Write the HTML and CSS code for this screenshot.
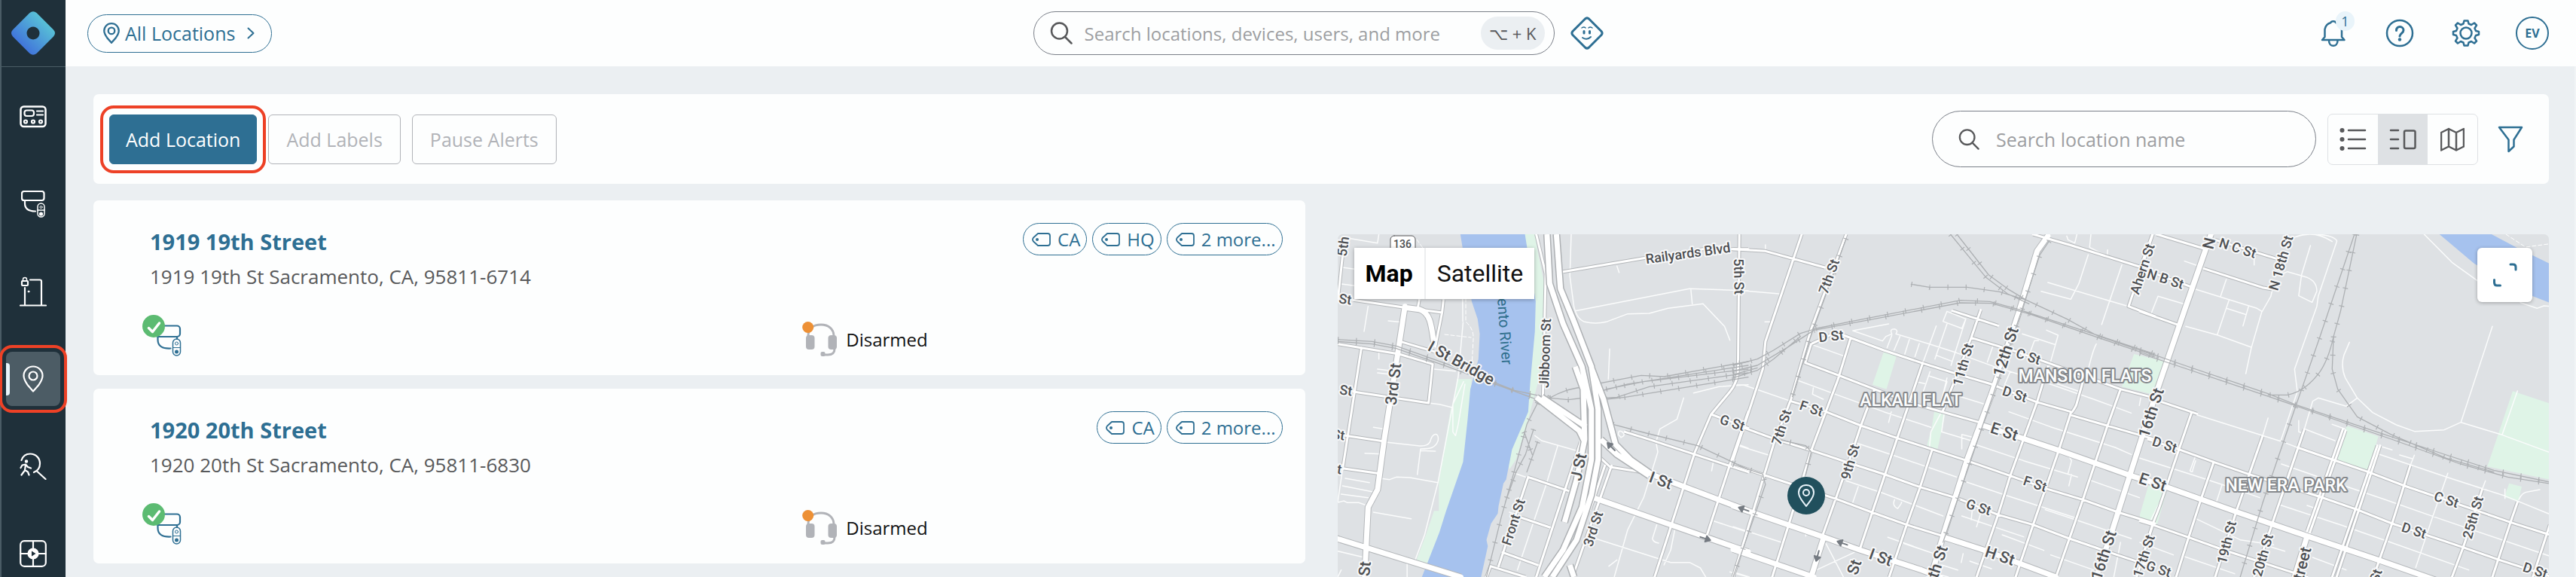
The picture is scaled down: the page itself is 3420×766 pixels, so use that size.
FILE: index.html
```html
<!DOCTYPE html>
<html lang="en">
<head>
<meta charset="utf-8">
<meta name="viewport" content="width=device-width, initial-scale=1">
<title>Locations</title>
<link rel="stylesheet" href="styles.css">
</head>
<body>
<svg class="sprite" aria-hidden="true">
  <symbol id="i-pin" viewBox="0 0 28 36"><path d="M14 1.5C7 1.5 1.5 7 1.5 13.800c0 4.500 2.500 8.500 5.500 12.700L14 34.500l7-8c3-4.200 5.500-8.200 5.500-12.700C26.500 7 21 1.500 14 1.500z"/><circle cx="14" cy="14" r="5.500"/></symbol>
  <symbol id="i-search" viewBox="0 0 30 30"><circle cx="12.500" cy="12" r="10.500"/><path d="M20 20l8.500 8.500"/></symbol>
  <symbol id="i-tag" viewBox="0 0 26 18"><path d="M9 1h13a3 3 0 0 1 3 3v10a3 3 0 0 1-3 3H9L3 11.500Q1 9 3 6.500z"/><circle class="dot" cx="8" cy="9" r="2"/></symbol>
  <symbol id="i-camera" viewBox="0 0 52 55">
    <rect x="17" y="14.500" width="33" height="14.500" rx="4"/><path d="M20.500 30v3c0 8.500 6 12 17 11.500M46 29v3"/>
    <rect class="remote" x="40.500" y="32" width="10" height="22" rx="5"/><path class="thin" d="M40.500 43.500h10"/><circle class="thin" cx="45.500" cy="38" r="2"/><circle class="dot" cx="45.500" cy="49" r="2.500"/>
    <circle class="ok" cx="15" cy="15" r="15"/><path class="tick" d="M8.500 17.500l5 5L22.500 11"/>
  </symbol>
  <symbol id="i-headset" viewBox="0 0 46 46">
    <path class="band" d="M8 19C8 9 15 4 25 4s17 6 17 15M43 36c0 6-3 8-9 8h-6"/>
    <rect class="pad" x="5" y="18" width="11.500" height="19" rx="4"/><rect class="pad" x="34.500" y="18" width="11.500" height="19" rx="4"/><rect class="pad" x="24.500" y="40" width="6" height="6" rx="2"/>
    <circle class="state" cx="7.700" cy="7.500" r="7.500"/>
  </symbol>
</svg>
<div class="app">
  <nav class="sidebar" aria-label="Main">
    <a class="logo" href="#" aria-label="Home">
      <svg width="58" height="58" viewBox="0 0 58 58"><defs><linearGradient id="brand" x1="0.200" y1="0.800" x2="0.800" y2="0.200"><stop offset="0" stop-color="#4072db"/><stop offset="1" stop-color="#59c4d6"/></linearGradient></defs><path fill="url(#brand)" fill-rule="evenodd" d="M24.500 2Q29-1.500 33.500 2L56 24.500Q60 29 56 33.500L33.500 56Q29 59.500 24.500 56L2 33.500Q-2 29 2 24.500zM29 20.500a8.500 8.500 0 1 0 .01 0z"/></svg>
    </a>
    <div class="nav-items">
      <a class="nav-item" href="#" aria-label="Intercoms"><svg class="icon-line" width="36" height="30" viewBox="0 0 36 30"><rect x="1.500" y="1.500" width="33" height="26.500" rx="4" stroke-width="2.500"/><rect x="6.500" y="6.500" width="12.500" height="7.500" rx="3"/><path d="M23 7.500h8M23 12.500h8"/><circle cx="8" cy="21.500" r="2"/><circle cx="18" cy="21.500" r="2"/><circle cx="28" cy="21.500" r="2"/></svg></a>
      <a class="nav-item" href="#" aria-label="Cameras"><svg class="icon-line" width="32" height="36" viewBox="0 0 32 36"><rect x="1" y="1" width="29.500" height="12" rx="3"/><path d="M5 14v3c0 7 5 10.500 14 10.500"/><rect x="22" y="17" width="9" height="18" rx="4.500" stroke-width="1.500"/><path d="M22 26h9" stroke-width="1.500"/><circle cx="26.500" cy="22" r="1.500" stroke-width="1"/><circle cx="26.500" cy="31" r="1.500" fill="#fff"/></svg></a>
      <a class="nav-item" href="#" aria-label="Doors"><svg class="icon-line" width="36" height="40" viewBox="0 0 36 40"><path d="M1 38.500h34M7 38V15M29 38V6.500q0-2-2-2H14"/><rect x="3" y="6" width="8" height="6" rx="1"/><path d="M4.500 6V4a2.500 2.500 0 0 1 5 0v2" stroke-width="1.500"/><circle cx="12" cy="20" r="1" fill="#fff" stroke-width="1"/></svg></a>
      <a class="nav-item is-active" href="#" aria-label="Locations" aria-current="page"><svg class="icon-line" width="28" height="36"><use href="#i-pin"/></svg></a>
      <a class="nav-item" href="#" aria-label="People search"><svg class="icon-line" width="36" height="36" viewBox="0 0 36 36"><path d="M2.500 10C4.500 4 9 1.500 14 1.500c8 0 13 6 13 13 0 5-3 9.500-8 11.500M23.500 25L34.500 35"/><circle cx="9" cy="11.500" r="1.500" fill="#fff" stroke-width="1.500"/><path d="M1.500 20l2-3.500 4.500-1 3 3.500 4 1.500M8 16l-1 7 4 2.500 1.500 4M6.500 24L2.500 29.500"/></svg></a>
      <a class="nav-item" href="#" aria-label="Video walls"><svg class="icon-line" width="36" height="36" viewBox="0 0 36 36"><rect x="1.200" y="1.200" width="33.600" height="33.600" rx="5"/><path d="M18 1v34M1 18h34"/><circle cx="18" cy="18" r="6.500" fill="#fff"/><path d="M16 14.500v7l5.500-3.500z" fill="#1f303a" stroke="none"/></svg></a>
    </div>
  </nav>
  <div class="page">
    <header class="topbar">
      <div class="topbar-start"><button class="scope" type="button"><svg class="scope-pin" width="22" height="28"><use href="#i-pin"/></svg><span>All Locations</span><svg class="chevron" width="10" height="16" viewBox="0 0 10 16"><path d="M1.500 1.500L8.500 8l-7 6.500"/></svg></button></div>
      <div class="topbar-center">
        <label class="global-search"><svg class="search-icon" width="30" height="30"><use href="#i-search"/></svg><input type="search" aria-label="Global search" placeholder="Search locations, devices, users, and more"><kbd>⌥ + K</kbd></label>
        <button class="icon-button" type="button" aria-label="Assistant"><svg width="44" height="44" viewBox="0 0 44 44"><path stroke-width="3" d="M19.500 3Q22 .8 24.500 3L41 19.500Q43.200 22 41 24.500L24.500 41Q22 43.200 19.500 41L3 24.500Q.8 22 3 19.500z"/><path stroke-width="1.500" d="M15 15q3-2 5 0M24 15q2-2 5 0"/><path stroke-width="3" d="M18 19.500v2.500M25.500 19.500v2.500"/><path stroke-width="2" d="M16 28q6 4 11-1"/></svg></button>
      </div>
      <div class="topbar-end">
        <button class="icon-button" type="button" aria-label="Notifications"><svg width="36" height="38" viewBox="0 0 36 38"><path d="M3 28l3.500-4V14C7.500 8 11 6 14.500 5c.5-2.500 6-2.500 6.500 0 4 1 7.500 4 8 9v10l3.500 4zM12 29c0 9 11.500 9 11.500 0"/></svg><span class="badge">1</span></button>
        <button class="icon-button" type="button" aria-label="Help"><svg width="38" height="38" viewBox="0 0 38 38"><circle cx="19" cy="19" r="17"/><path stroke-width="3" d="M14.500 15.500c0-7 9.500-6 9.500-.5 0 4-4.500 4-5 8"/><circle class="dot" cx="19" cy="27.500" r="2.200"/></svg></button>
        <button class="icon-button" type="button" aria-label="Settings"><svg width="38" height="38" viewBox="0 0 38 38"><path d="M16.500 2.500h5l1 4 3.500 1.500 4-2.500 3 3-2.500 4L32 16l4 1v4l-4 1-1.500 3.500 2.500 4-3 3-4-2.500L22.500 31.500l-1 4h-5l-1-4L12 30l-4 2.500-3-3 2.500-4L6 22l-4-1v-4l4-1 1.500-3.500L5 8.500l3-3L12 8l3.500-1.500z"/><circle cx="19" cy="19" r="7.500"/></svg></button>
        <button class="avatar" type="button" aria-label="Account">EV</button>
      </div>
    </header>
    <main class="content">
      <section class="toolbar" aria-label="Location actions">
        <button class="btn btn-primary" type="button">Add Location</button>
        <button class="btn" type="button" disabled>Add Labels</button>
        <button class="btn" type="button" disabled>Pause Alerts</button>
        <label class="location-search"><svg class="search-icon" width="28" height="28"><use href="#i-search"/></svg><input type="search" aria-label="Search location name" placeholder="Search location name"></label>
        <div class="view-switch" role="group" aria-label="View">
          <button type="button" aria-label="List"><svg width="36" height="32" viewBox="0 0 36 32"><path d="M12 4h22M12 16h22M12 28h22"/><g class="dot"><circle cx="3.500" cy="4" r="3"/><circle cx="3.500" cy="16" r="3"/><circle cx="3.500" cy="28" r="3"/></g></svg></button>
          <button type="button" aria-label="Split" aria-pressed="true"><svg width="36" height="32" viewBox="0 0 36 32"><path d="M2 4h10M2 16h10M2 28h10"/><rect x="20" y="4.500" width="14.500" height="23.500" rx="2"/></svg></button>
          <button type="button" aria-label="Map"><svg width="32" height="32" viewBox="0 0 32 32"><path d="M1 7l10-5 10 5 10-5v23.500L21 30.500l-10-5-10 5zM11 2v23.500M21 7v23.500"/></svg></button>
        </div>
        <button class="filter" type="button" aria-label="Filter"><svg width="34" height="36" viewBox="0 0 34 36"><path d="M2 2h30L21.500 18.500v9L14.500 34V18.500z"/></svg></button>
      </section>
      <div class="columns">
        <div class="list">
          <article class="card">
            <div class="card-head"><div><h2><a href="#">1919 19th Street</a></h2><p>1919 19th St Sacramento, CA, 95811-6714</p></div>
              <div class="tags"><a class="tag" href="#"><svg width="26" height="18"><use href="#i-tag"/></svg>CA</a><a class="tag" href="#"><svg width="26" height="18"><use href="#i-tag"/></svg>HQ</a><a class="tag" href="#"><svg width="26" height="18"><use href="#i-tag"/></svg>2 more...</a></div></div>
            <div class="card-status"><svg class="camera" width="52" height="55" role="img" aria-label="Cameras online"><use href="#i-camera"/></svg><div class="arming"><svg width="46" height="46"><use href="#i-headset"/></svg><span>Disarmed</span></div></div>
          </article>
          <article class="card">
            <div class="card-head"><div><h2><a href="#">1920 20th Street</a></h2><p>1920 20th St Sacramento, CA, 95811-6830</p></div>
              <div class="tags"><a class="tag" href="#"><svg width="26" height="18"><use href="#i-tag"/></svg>CA</a><a class="tag" href="#"><svg width="26" height="18"><use href="#i-tag"/></svg>2 more...</a></div></div>
            <div class="card-status"><svg class="camera" width="52" height="55" role="img" aria-label="Cameras online"><use href="#i-camera"/></svg><div class="arming"><svg width="46" height="46"><use href="#i-headset"/></svg><span>Disarmed</span></div></div>
          </article>
        </div>
        <section class="map" aria-label="Map of locations">
          <svg class="map-canvas" viewBox="1775 311 1609 455" preserveAspectRatio="xMinYMin slice">
            <defs>
              <g id="minor">
                <g transform="translate(1760 290) scale(.35714 .33333)"><path d="M90 80L190 98L195 63M60 195L105 202M50 260L105 268M155 350L140 450M230 408L270 412M195 535V560M190 600L230 605M190 615L245 622M175 832L210 838M143 935L205 938M215 890L340 905Q375 910 385 890C395 850 420 850 415 885C405 915 385 918 350 918L338 1020M350 925L405 927M200 1035L235 1040L260 1030L310 1032L415 1052M380 735L420 740L465 752M400 600L480 608M505 200L507 410M508 415L490 630L415 1050L365 1260L330 1360M510 650L470 740V850L480 865L490 820L515 660M70 1035L160 1052M60 1065L170 1088M55 1098L155 1112M45 1130L65 1125L78 1132H120L155 1145M175 1170L315 1196M60 1000L42 1130M42 1325L140 1350M300 1370V1428M910 63L905 230L920 350Q930 400 960 412Q1000 422 1040 412L1120 380L1200 378L1270 358L1400 340L1480 430L1500 485M925 368L1350 280L1568 288M1355 285L1360 340M1053 520L1048 640M1365 695L1460 670L1568 662M1328 715L1303 800L1240 838L1225 890L1232 930L1180 1110L1120 1240L1070 1428M1085 860Q1085 840 1100 850Q1115 865 1095 872zM1440 960L1432 1005M775 865L800 885L930 925M860 905L820 1050L710 1400M700 1015L740 1030M680 1170L720 1185M1228 1220L1212 1275Q1215 1290 1235 1293M1000 1275L1280 1370L1350 1370L1390 1392L1410 1428M1295 1240L1280 1320L1255 1380M1440 1205L1568 1250M1050 1385L1080 1360M1500 1408L1568 1428M1530 900L1568 915M1080 190L1088 215M42 1428L55 1400"/></g>
                <g transform="translate(2300 290) scale(.35714 .33333)"><path d="M40 288L170 300M120 105V125M118 412H140M0 662L40 664L90 682L215 728M300 505L412 548M240 645L380 700L560 770L735 832M298 675L295 700L335 720M445 447L578 420M445 447L555 488L568 470L590 460Q580 440 600 440Q615 445 605 460L730 500L830 535M590 465L572 515M620 470L598 525M655 482L638 540M692 498L676 550M755 428L705 575M795 370L780 410L850 438L865 400zM795 420L750 560M865 400L810 585M755 545L812 568M732 610L705 695M730 628L795 650L770 735M795 635L778 710M687 652L712 658M588 770L578 812M785 690L930 738M775 770L735 850L730 910M785 772L775 850L885 885M850 860V918M850 860L885 870M460 895L600 945L830 1030M420 1045L560 1095L780 1185M465 1068L445 1130M600 1120Q590 1145 612 1155Q630 1130 625 1130M868 1050L1020 1105L1280 1195M850 1185L1080 1268M885 895L1080 965L1280 1030M1025 770L1180 830L1420 912L1480 940M1100 620L1290 690M1165 655L1340 720L1480 775M1075 460L1195 502M1165 445L1208 465L1175 590M1135 487L1120 487L1105 530M1350 500Q1340 520 1330 560L1310 640M965 510L945 572M830 535L970 590L1165 655M1030 610L1010 660M1250 950L1258 965L1245 1015M1258 1020L1248 1065M1320 1040L1510 1112M1170 255L1405 330L1470 350M1145 290L1255 322L1285 260L1320 145M1445 185L1370 422M1240 70L1245 85L1270 98L1278 63M1330 63L1325 115L1390 150L1392 125M1180 1340L1340 1400M1160 1160L1300 1210L1480 1275M0 1228L180 1290M20 905L140 945M345 1295L410 1428M310 1400L450 1330M270 1250V1265M635 1295L760 1340M775 1380L770 1420L800 1428M775 1380L835 1400M855 1335L848 1370M890 1150L885 1200M920 1175L905 1228M880 1365L960 1395M1000 1260L1155 1322M0 1408L60 1428M1515 715L1510 745M1440 1290L1415 1428M575 1270L760 1340"/></g>
                <g transform="translate(2840 290) scale(.36997 .33333)"><path d="M200 282L420 358L438 370L400 515L380 618M165 430L280 465L400 513M310 243L290 308M320 325L278 462M310 358L378 382M390 350L370 428M40 380L65 310L165 343M160 170L225 195M410 150V185M475 285L470 310L438 372M612 108L580 225L570 308L618 334L635 290Q635 250 600 235L530 212L500 225M545 80Q620 40 690 92M640 63Q700 70 707 90L640 310L635 350L555 600L565 690L505 887L205 782M460 795L440 868M1020 63L1120 175L1214 250M1365 335L1425 358L1450 348L1471 350M1265 430L1152 812L1092 842L985 848L920 822L835 773L780 715L737 635Q720 590 732 545L752 493M780 715L740 748L640 715L620 728L590 840M1152 812L1300 862L1471 932M1355 687L1300 862M690 820L735 838M525 895L565 912M508 978L720 1060L880 1120L1060 1190L1471 1345M860 940L1100 1030L1310 1105L1471 1178M870 910L905 922M932 942L980 958M985 943L970 985M1105 1015L1050 1190L990 1390M1310 1115V1078M1360 1120Q1370 1090 1395 1088L1435 1080M1240 1045L1228 1080M0 955L200 1025L295 1060L430 1112M295 1060L275 1128M200 945L180 1005Q190 1015 190 1000L200 965M500 1140L720 1220L900 1290L1180 1400M200 1195L360 1280L480 1300M620 1350L740 1400M600 1143L640 1158M95 1080L35 1210M0 1290L120 1340M155 1345L340 1415M445 1300L520 1325M570 805V850L580 853M595 840L700 885M0 1385L40 1400"/></g>
              </g>
              <g id="streets">
                <g transform="translate(1760 290) scale(.35714 .33333)"><path d="M780 63L815 220L805 705M880 212L1195 155L1400 122L1568 122M1535 63L1530 600Q1530 650 1500 690L1430 780L1370 930L1220 1428M1568 770L1500 980L1415 1260M1110 850L1200 880L1568 1010M1430 780L1568 835M60 150L42 330M100 325L290 355L430 375L405 510M275 490L400 530M42 500L270 540L395 580L380 735L100 690M130 515L60 1000M70 865L215 888M60 995L190 1015M435 325L430 375M345 325L340 355M750 1030L900 1085M720 1190L830 1230M750 1030L640 1385M655 1330L785 1380M595 1428L610 1385L740 1428M945 890L780 1428M1060 985L915 1428M1035 985L980 1160M1020 955L1055 990L1200 1015"/></g>
                <g transform="translate(2300 290) scale(.35714 .33333)"><path d="M255 63L120 490L110 600L0 960M420 63L290 440L215 720L150 900L0 1428M360 465L290 500L268 575L400 628L525 680L660 735L915 812M437 475L390 640L290 925L205 1225L145 1428M525 680L475 825L430 970L330 1270M705 575L610 875L470 1320M920 365L885 475L780 765M740 920L695 1070L645 1220L580 1428M1170 590L1130 730L1030 1025L985 1180L905 1428M1300 650L1275 745Q1260 775 1255 775L1210 925L1115 1220L1050 1428M1440 680L1390 830L1300 1120L1250 1275L1200 1428M1560 1220L1500 1428M410 465L560 525L700 575L840 622L960 660L1125 730L1255 770M1260 785L1568 880M215 728L345 770L475 825L610 875L740 920L870 965L1030 1025L1170 1078L1300 1120L1430 1170L1568 1215M0 818L145 875L295 925L435 975L565 1020L695 1070L835 1115L985 1180L1115 1220L1250 1275L1400 1330L1568 1390M0 980L110 1020L385 1118L515 1170L645 1220L780 1265M885 475L1050 530L1170 575L1440 680L1568 715M815 368L985 427M1115 63L1250 105L1520 195M0 122L120 130L340 195M1560 63L1470 350L1568 390"/></g>
                <g transform="translate(2840 290) scale(.36997 .33333)"><path d="M185 775L140 920L70 1150L45 1220L0 1380M265 970L220 1115L175 1270L130 1428M440 868L345 1170L270 1428M590 840L475 1215L410 1428M728 840L600 1245M738 845L610 1250M852 905L690 1428M862 905L706 1428M970 985L905 1215L850 1390M1228 1080L1160 1310L1120 1428M1355 1130L1330 1210L1265 1428M1471 1220L1410 1428M62 725L205 778M60 63L230 120M230 200L440 275L475 282M30 210L190 275M0 370L140 425M270 85L490 160M30 880L140 920L265 970L390 1018L650 1110L780 1160L905 1215L1160 1310L1290 1360L1471 1425M565 912L690 960L820 1010L950 1065L1200 1160L1330 1210L1471 1260M0 1205L45 1220L175 1270L300 1320L520 1400L600 1428M45 63L0 200"/></g>
              </g>
              <g id="avenues">
                <g transform="translate(1760 290) scale(.35714 .33333)"><path d="M0 1262L500 1428M292 350L265 540L215 880L190 1080L155 1150L142 1428M292 355L345 362C385 375 390 420 400 500M1210 1020L1568 1165M1000 1115L1568 1328"/></g>
                <g transform="translate(2300 290) scale(.35714 .33333)"><path d="M0 1145L340 1270L470 1320L700 1400L770 1428M0 1318L300 1428M930 825L1060 870L1215 925L1480 1025L1568 1055M1170 70L1130 130L1060 380L960 700L870 960L780 1265L735 1428M785 1270L930 1320L1200 1428M1520 870L1410 1240L1350 1428M335 1275L290 1428"/></g>
                <g transform="translate(2840 290) scale(.36997 .33333)"><path d="M255 63L165 350L60 690L10 860M20 1040L350 1170L600 1265L855 1360L1060 1440M600 1265L555 1428"/></g>
              </g>
              <g id="freeways" transform="translate(1760 290) scale(.35714 .33333)"><path d="M925 590L955 680L960 880L930 1040L885 1210M985 595L1030 720L1075 900L1130 960L1210 1020M780 712L940 845L960 890M800 712L965 830M1020 880L1080 940L1200 1025M820 63L830 260L880 420L950 590L985 760V960L950 1150L880 1320L810 1428M855 63L870 280L920 410L985 590L1010 760V960L985 1100L930 1280L840 1428M905 1380L920 1428"/></g>
              <g id="rails">
                <g transform="translate(1760 290) scale(.35714 .33333)"><path d="M42 482L170 490L260 508L450 580L700 685L830 715M42 490L170 500L260 518L450 590L780 720M785 735L745 820L700 1000L650 1190L595 1428M830 715C870 690 900 680 950 672M830 715L900 722L960 714M1000 660L1170 625L1255 630L1568 570M1010 690L1120 660L1568 585M1040 680L1180 650L1568 600M1020 716L1080 712L1200 670L1568 615M1040 720L1110 712L1568 632M1065 820L1200 858L1380 905L1568 1000M770 840L740 940L705 1010L665 1130M785 890L745 1010M735 850L765 940"/></g>
                <g transform="translate(2300 290) scale(.35714 .33333)"><path d="M0 585L90 560L150 525L250 458L310 438L440 410L845 326L955 331L1060 362L1568 540M0 608L90 585L200 515L300 445L845 336L960 338L1100 380L1568 552M0 635L90 605L150 560L250 470M0 622L90 595M662 262L730 274L870 274L990 292L1090 325L1240 400L1350 465L1568 546M808 63L940 235L1020 300L1100 340M832 63L950 225L1020 280L1090 325M0 980L110 1018L120 1060L0 1428M1175 90L1140 145L1070 375L780 1290M420 80L285 480L220 710M145 875L270 905L290 930L270 1020"/></g>
                <g transform="translate(2840 290) scale(.36997 .33333)"><path d="M0 523L160 585L460 698L560 742L850 850L1100 942L1270 1003L1471 1050M0 537L170 600L470 712L910 882L1150 978L1320 1030L1471 1056M770 63L645 475L560 745L440 1135L360 1428M778 63L720 370L695 470Q675 570 640 620Q590 690 530 703H460M695 470L690 600L710 680L780 790L900 860L1100 955L1270 1010"/></g>
              </g>
              <path id="arrow" d="M-7 0H2M1-4L7 0L1 4z"/>
            </defs>
            <rect class="land" x="1775" y="311" width="1609" height="455"/>
            <g class="park">
              <path transform="translate(1760 290) scale(.35714 .33333)" d="M485 640L480 690L460 770L440 900L418 1050V1165H400L370 1260L335 1360L375 1375L450 1250L520 970L540 640zM730 63H776L785 130L810 260L808 420L790 640L770 720L745 820L705 960L680 1000L670 940L740 700L760 330z"/>
              <path transform="translate(2300 290) scale(.35714 .33333)" d="M560 530L608 545L570 680L518 662zM748 765L790 772L760 918L720 905L738 835z"/>
              <path transform="translate(2840 290) scale(.36997 .33333)" d="M-21 540L92 570L60 705L-65 670zM742 826L856 868L820 1002L707 965zM1338 688L1471 737V1040L1247 988zM1325 1055L1370 1068L1358 1128L1308 1110zM30 1065L98 1080L62 1218L0 1195V1180z"/>
            </g>
            <g class="water">
              <path transform="translate(1760 290) scale(.35714 .33333)" d="M498 63L508 130L540 330L562 400L570 460L565 560L535 680L525 800L508 970L445 1165L420 1250L355 1428H575L600 1305L595 1280L612 1215L637 1175L640 1145L658 1055L668 1040L690 920L750 770L758 650L775 450L778 330L738 63z"/>
              <path transform="translate(2840 290) scale(.36997 .33333)" d="M1075 63L1200 180L1410 310L1471 336V180L1350 115L1262 63z"/>
            </g>
            <path class="trail" d="M1945 340V427Q1956 437 1955 450L1953 488M1917 444L1952 448M1880 318L1890 332M3326 311L3352 328L3382 324"/>
            <use href="#minor" class="minor"/>
            <use href="#streets" class="street-edge"/><use href="#avenues" class="avenue-edge"/>
            <use href="#streets" class="street"/><use href="#avenues" class="avenue"/>
            <use href="#rails" class="rail"/><use href="#rails" class="rail-ties"/>
            <use href="#freeways" class="freeway-edge"/><use href="#freeways" class="freeway"/>
            <g class="arrows"><use href="#arrow" transform="translate(2138 593) rotate(225)"/><use href="#arrow" transform="translate(2314 676) rotate(200)"/><use href="#arrow" transform="translate(2263 715) rotate(18)"/><use href="#arrow" transform="translate(2445 721) rotate(200)"/><use href="#arrow" transform="translate(2412 738) rotate(105)"/></g>
            <g class="shield"><rect x="1845" y="313" width="33" height="26" rx="5"/><text x="1861" y="324">136</text></g>
            <g class="label">
              <text transform="translate(1782 327) rotate(-82)">5th</text><text transform="translate(1785 397) rotate(8)">St</text><text transform="translate(1786 518) rotate(8)">St</text><text transform="translate(1776 577) rotate(8)">St</text><text transform="translate(1772 622) rotate(8)">St</text>
              <text transform="translate(2050 469) rotate(-88)">Jibboom St</text><text transform="translate(2240 336) rotate(-8)">Railyards Blvd</text><text transform="translate(2308 367) rotate(89)">5th St</text><text transform="translate(2299 561) rotate(18)">G St</text><text transform="translate(2008 693) rotate(-72)">Front St</text><text transform="translate(2114 702) rotate(-72)">3rd St</text>
              <text transform="translate(2427 367) rotate(-70)">7th St</text><text transform="translate(2364 567) rotate(-72)">7th St</text><text transform="translate(2430 446) rotate(-6)">D St</text><text transform="translate(2605 484) rotate(-74)">11th St</text><text transform="translate(2692 473) rotate(18)">C St</text><text transform="translate(2674 523) rotate(18)">D St</text><text transform="translate(2404 542) rotate(18)">F St</text><text transform="translate(2455 613) rotate(-74)">9th St</text><text transform="translate(2701 642) rotate(18)">F St</text><text transform="translate(2626 673) rotate(18)">G St</text>
              <text transform="translate(2843 357) rotate(-72)">Ahern St</text><text transform="translate(2845 738) rotate(-72)">17th St</text><text transform="translate(2865 755) rotate(18)">G St</text><text transform="translate(2970 329) rotate(18)">N C St</text><text transform="translate(3027 349) rotate(-74)">N 18th St</text><text transform="translate(2874 370) rotate(18)">N B St</text><text transform="translate(2873 590) rotate(18)">D St</text><text transform="translate(3247 663) rotate(18)">C St</text><text transform="translate(3204 704) rotate(18)">D St</text><text transform="translate(3282 687) rotate(-74)">25th St</text><text transform="translate(3365 757) rotate(18)">D St</text><text transform="translate(2955 720) rotate(-76)">19th St</text><text transform="translate(3003 737) rotate(-74)">20th St</text><text transform="translate(3153 764) rotate(-72)">St</text>
            </g>
            <g class="label label-major">
              <text transform="translate(1849 510) rotate(-83)">3rd St</text><text transform="translate(1939 482) rotate(29)">I St Bridge</text><text transform="translate(2095 620) rotate(-78)">J St</text><text transform="translate(2204 638) rotate(20)">I St</text><text transform="translate(1811 755) rotate(-84)">St</text>
              <text transform="translate(2662 467) rotate(-72)">12th St</text><text transform="translate(2660 573) rotate(18)">E St</text><text transform="translate(2496 740) rotate(20)">I St</text><text transform="translate(2654 738) rotate(18)">H St</text><text transform="translate(2461 753) rotate(-72)">St</text><text transform="translate(2568 757) rotate(-72)">10th St</text><text transform="translate(2855 548) rotate(-72)">16th St</text><text transform="translate(2792 737) rotate(-72)">16th St</text><text transform="translate(2932 323) rotate(-76)">N</text><text transform="translate(2857 640) rotate(18)">E St</text><text transform="translate(3054 754) rotate(-76)">Street</text>
            </g>
            <g class="river"><text transform="translate(1997 440) rotate(86)">ento River</text></g>
            <g class="district"><text x="2767" y="499">MANSION FLATS</text><text x="2536" y="531">ALKALI FLAT</text><text x="3034" y="644">NEW ERA PARK</text></g>
            <g class="marker" transform="translate(2397 658)"><circle class="marker-bg" r="25"/><path d="M0 14C-4 8-10 3-10-4C-10-10-6-14 0-14S10-10 10-4C10 3 4 8 0 14z"/><circle cy="-4" r="4"/></g>
          </svg>
          <div class="map-type"><button class="is-current" type="button">Map</button><button type="button">Satellite</button></div>
          <button class="fullscreen" type="button" aria-label="Toggle fullscreen"><svg width="34" height="32" viewBox="0 0 34 32"><path d="M24 2h3.500q3.500 0 3.500 3.500V9M2.500 22.500V26Q2.500 30 6 30h4.500"/></svg></button>
        </section>
      </div>
    </main>
  </div>
</div>
</body>
</html>
```
FILE: styles.css
```css
:root {
  --blue: #2e6f93;
  --ink: #58595b;
  --muted: #9d9fa2;
  --disabled: #b1b3b8;
  --surface: #fdfefe;
  --canvas: #ebeff2;
  --navy: #1f303a;
  --alert: #ed4126;
}

* { box-sizing: border-box; }
body { margin: 0; font-family: "Open Sans", "Noto Sans", sans-serif; font-size: 25px; color: var(--ink); background: var(--canvas); }
button, input, kbd { font: inherit; color: inherit; }
button { padding: 0; border: 0; background: none; }
a { color: inherit; text-decoration: none; }
svg { display: block; flex: none; fill: none; stroke: currentColor; stroke-width: 2.5; stroke-linecap: round; stroke-linejoin: round; }
.sprite { position: absolute; width: 0; height: 0; }
.dot { fill: currentColor; stroke: none; }

.app { display: flex; height: 100vh; overflow: hidden; }

/* Sidebar */
.sidebar { flex: none; position: relative; z-index: 1; width: 87px; box-shadow: inset 2px 0 #4a5c65; background: var(--navy); color: #fff; }
.logo { display: flex; align-items: center; justify-content: center; height: 89px; border-bottom: 1px solid #4a5c65; }
.logo svg { stroke: none; }
.nav-items { display: flex; flex-direction: column; align-items: center; gap: 44px; padding-top: 30px; }
.nav-item { display: flex; align-items: center; justify-content: center; width: 72px; height: 72px; border-radius: 8px; }
.nav-item .icon-line { stroke-width: 2.2; }
.nav-item.is-active { position: relative; background: #4c5c65; outline: 4px solid var(--alert); outline-offset: 5px; border-radius: 8px; }
.nav-item.is-active::before { content: ""; position: absolute; left: 0; top: 15px; width: 5px; height: 43px; border-radius: 0 4px 4px 0; background: #e9f4fa; }

/* Top bar */
.page { flex: 1; min-width: 0; display: flex; flex-direction: column; }
.topbar { flex: none; display: grid; grid-template-columns: 1fr auto 1fr; align-items: center; height: 88px; padding: 0 36px 0 29px; background: var(--surface); color: var(--blue); }
.scope { display: flex; align-items: center; gap: 7px; height: 51px; padding: 0 22px 0 20px; border: 1px solid var(--blue); border-radius: 26px; }
.scope-pin { stroke-width: 3; }
.chevron { margin-left: 9px; stroke-width: 2; }
.topbar-center { display: flex; align-items: center; gap: 21px; }
.global-search { display: flex; align-items: center; gap: 16px; width: 692px; height: 58px; padding: 0 12px 0 21px; border: 1px solid #7a7f88; border-radius: 29px; color: var(--ink); font-size: 24px; }
input { flex: 1; min-width: 0; padding: 0; border: 0; outline: 0; background: none; }
input::placeholder { color: var(--muted); opacity: 1; }
kbd { flex: none; padding: 0 11px; border-radius: 22px; background: var(--canvas); font-size: 22px; line-height: 44px; }
.topbar-end { display: flex; justify-content: flex-end; align-items: center; gap: 44px; }
.icon-button { position: relative; display: flex; align-items: center; justify-content: center; width: 44px; height: 44px; color: var(--blue); }
.badge { position: absolute; top: -7px; right: -6px; width: 25px; height: 26px; border-radius: 13px; background: #e9f4fa; font-size: 18px; line-height: 26px; text-align: center; }
.avatar { width: 44px; height: 44px; border: 2px solid var(--blue); border-radius: 22px; font-size: 16px; font-weight: 700; }

/* Toolbar */
.content { flex: 1; min-height: 0; display: flex; flex-direction: column; gap: 22px; padding: 37px 34px 0 37px; border-right: 2px solid #f1f4f6; }
.toolbar { flex: none; display: flex; align-items: center; gap: 15px; padding: 22px 34px 22px 21px; border-radius: 7px; background: var(--surface); }
.btn { height: 66px; padding: 0 23px; border: 1px solid var(--disabled); border-radius: 6px; color: var(--disabled); }
.btn-primary { padding: 0 21px; border-color: var(--blue); background: var(--blue); color: #fff; outline: 4px solid var(--alert); outline-offset: 8px; }
.location-search { display: flex; align-items: center; gap: 22px; width: 510px; height: 75px; margin-left: auto; padding: 0 34px; border: 1px solid #7a7f88; border-radius: 38px; }
.view-switch { display: flex; height: 68px; border: 1px solid #dee1e4; border-radius: 7px; overflow: hidden; }
.view-switch button { display: flex; align-items: center; justify-content: center; width: 66px; }
.view-switch button[aria-pressed="true"] { background: #dee1e4; }
.filter { margin-left: 11px; color: var(--blue); }

/* Location list */
.columns { flex: 1; min-height: 0; display: grid; grid-template-columns: 1fr 1fr; grid-template-rows: 100%; gap: 43px; }
.list { display: flex; flex-direction: column; gap: 18px; }
.card { flex: none; padding: 30px 30px 25px 65px; border-radius: 7px; background: var(--surface); }
.card-head { display: flex; justify-content: space-between; align-items: flex-start; padding-left: 10px; }
h2 { margin: 7px 0 10px; color: var(--blue); font-size: 29px; line-height: 36px; font-weight: 700; }
p { margin: 0; font-size: 26px; line-height: 36px; }
.tags { display: flex; gap: 7px; color: var(--blue); font-size: 24px; }
.tag { display: flex; align-items: center; gap: 9px; height: 43px; padding: 0 8px 0 10px; border: 1px solid var(--blue); border-radius: 22px; }
.tag svg { stroke-width: 1.8; }
.card-status { display: grid; grid-template-columns: 11fr 8fr; align-items: end; height: 56px; margin-top: 32px; }
.camera { color: var(--blue); }
.camera, .thin { stroke-width: 2.2; }
.thin { stroke-width: 1; }
.remote { stroke-width: 1.5; }
.ok { fill: #5cbb72; stroke: none; }
.tick { stroke: #fff; stroke-width: 3.5; }
.arming { display: flex; align-items: flex-end; gap: 12px; color: #111; font-size: 24px; line-height: 44px; }
.band { stroke: #b1b3b8; stroke-width: 3; }
.pad { fill: #b1b3b8; stroke: none; }
.state { fill: #ed9035; stroke: none; }

/* Map */
.map { position: relative; margin-top: 45px; border-radius: 7px 7px 0 0; overflow: hidden; background: #dee1e4; font-family: Roboto, sans-serif; }
.map-canvas { position: absolute; inset: 0; width: 100%; height: 100%; }
.map-canvas path { vector-effect: non-scaling-stroke; }
.land { fill: #dee1e4; stroke: none; }
.water { fill: #a6c2ee; stroke: none; }
.park { fill: #dff4e7; stroke: none; }
.trail { stroke: #fff; stroke-width: 1; stroke-dasharray: 5 3; }
.minor { stroke: #fbfcfc; stroke-width: 1.5; }
.street-edge { stroke: #b5b8bb; stroke-width: 5; stroke-linecap: butt; }
.street { stroke: #fff; stroke-width: 3; }
.avenue-edge { stroke: #b5b8bb; stroke-width: 9; stroke-linecap: butt; }
.avenue { stroke: #fff; stroke-width: 7; }
.freeway-edge { stroke: #adb0b3; stroke-width: 10; stroke-linecap: butt; }
.freeway { stroke: #fff; stroke-width: 7; stroke-linecap: butt; }
.rail { stroke: #adb0b3; stroke-width: 1.3; }
.rail-ties { stroke: #adb0b3; stroke-width: 7; stroke-dasharray: 1.2 23; stroke-linecap: butt; }
.arrows { fill: #757b82; stroke: #757b82; stroke-width: 2; }
.shield rect { fill: #fff; stroke: #58595b; stroke-width: 1; }
.map-canvas text { text-anchor: middle; dominant-baseline: central; paint-order: stroke; stroke: #f7f8f9; stroke-width: 4; fill: #4d4f52; font-size: 18px; font-weight: 500; }
.map-canvas .shield text { font-size: 14px; stroke: none; }
.map-canvas .label-major text { font-size: 21px; }
.map-canvas .river text { fill: #2f6f8c; stroke: none; font-size: 20px; font-weight: 400; }
.map-canvas .district text { fill: #fdfefe; stroke: #86898d; font-size: 23px; }
.marker { stroke: #e9f4fa; stroke-width: 2; }
.marker-bg { fill: #21505d; stroke: none; }
.map-type { position: absolute; top: 18px; left: 22px; display: flex; height: 68px; background: #fff; box-shadow: 0 1px 5px rgba(0, 0, 0, .3); color: #111; font-size: 32px; }
.map-type button { padding: 0 15px; }
.map-type button + button { border-left: 2px solid #eceeef; }
.map-type .is-current { font-weight: 700; color: #000; }
.fullscreen { position: absolute; top: 18px; right: 22px; display: flex; align-items: center; justify-content: center; width: 73px; height: 72px; border-radius: 6px; background: #fff; box-shadow: 0 1px 5px rgba(0, 0, 0, .3); color: var(--blue); }
.fullscreen svg { stroke-width: 3; }
```
